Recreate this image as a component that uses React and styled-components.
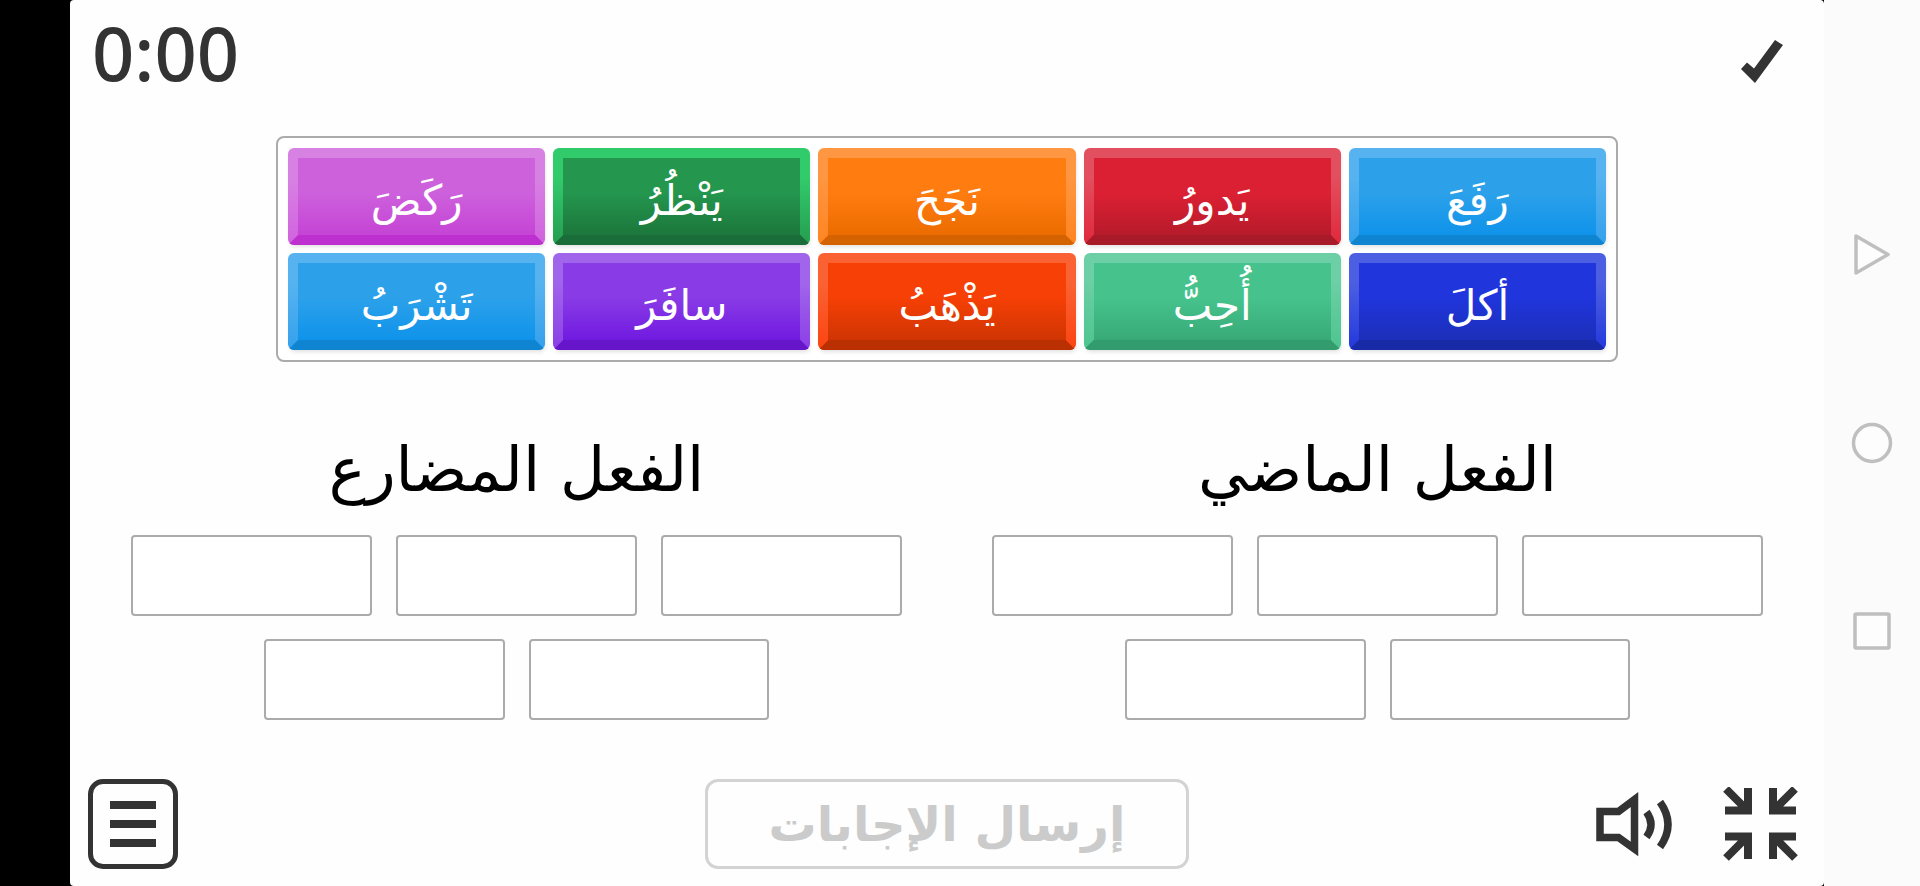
import React from "react";
import styled, { createGlobalStyle } from "styled-components";

const INK = "#333333";
const LINE = "#ababab";
const NAV = "#bfbfbf";

const GlobalStyle = createGlobalStyle`
  *, *::before, *::after { box-sizing: border-box; }
  html, body { margin: 0; padding: 0; background: #000; }
  body { font-family: "DejaVu Sans", "Noto Sans", sans-serif; color: #000; }
  button { font: inherit; color: inherit; margin: 0; padding: 0; border: 0; background: none; cursor: pointer; }
  svg { display: block; }
`;

const Screen = styled.div`
  display: grid;
  grid-template-columns: 70px minmax(0, 1fr) 96px;
  min-height: 100vh;
  background: #000;
`;

const Stage = styled.main`
  grid-column: 2;
  display: flex;
  flex-direction: column;
  background: #fefefe;
  border-radius: 4px;
`;

const Header = styled.header`
  display: flex;
  justify-content: space-between;
  align-items: flex-start;
  height: 136px;
  padding: 0 40px 0 22px;
`;

const Timer = styled.time`
  font-family: "Noto Sans", "Open Sans", sans-serif;
  font-size: 74px;
  font-weight: 500;
  line-height: 106px;
  color: ${INK};
`;

const Score = styled.div`
  padding-top: 40px;
`;

const Pool = styled.ul`
  display: grid;
  grid-template-columns: repeat(5, minmax(0, 1fr));
  gap: 8px;
  width: calc(100% - 412px);
  min-width: 700px;
  margin: 0 auto;
  padding: 10px;
  list-style: none;
  border: 2px solid ${LINE};
  border-radius: 8px;
  background: #fff;
`;

const Tile = styled.button`
  position: relative;
  display: flex;
  align-items: center;
  justify-content: center;
  width: 100%;
  height: 97px;
  padding-top: 8px;
  color: #fff;
  font-size: 42px;
  line-height: 60px;
  border: 10px solid transparent;
  border-radius: 6px;
  background:
    linear-gradient(${(p) => p.$tone.top} 45%, ${(p) => p.$tone.bottom}) padding-box,
    linear-gradient(${(p) => p.$tone.light} 30%, ${(p) => p.$tone.side}) border-box;
  box-shadow: 1px 3px 4px -1px rgba(0, 0, 0, 0.12);

  &::after {
    content: "";
    position: absolute;
    left: -10px;
    right: -10px;
    bottom: -10px;
    height: 10px;
    border-radius: 0 0 6px 6px;
    background: ${(p) => p.$tone.edge};
    clip-path: polygon(10px 0, calc(100% - 10px) 0, 100% 100%, 0 100%);
  }
`;

const Zones = styled.section`
  display: grid;
  grid-template-columns: 1fr 1fr;
  gap: 90px;
  padding: 0 61px;
`;

const Zone = styled.section`
  display: flex;
  flex-direction: column;
`;

const ZoneTitle = styled.h2`
  margin: 0;
  padding-top: 50px;
  height: 173px;
  text-align: center;
  font-size: 62px;
  font-weight: 400;
  line-height: 116px;
  white-space: nowrap;
`;

const Slots = styled.ul`
  display: flex;
  flex-wrap: wrap;
  justify-content: center;
  gap: 23px 24px;
  margin: 0;
  padding: 0;
  list-style: none;
`;

const Slot = styled.li`
  width: calc((100% - 48px) / 3);
  height: 81px;
  border: 2px solid ${LINE};
  border-radius: 4px;
  background: #fff;
`;

const Footer = styled.footer`
  display: grid;
  grid-template-columns: 1fr auto 1fr;
  align-items: center;
  margin-top: auto;
  padding: 20px 18px 17px;
`;

const MenuButton = styled.button`
  display: flex;
  flex-direction: column;
  align-items: center;
  justify-content: center;
  gap: 11px;
  width: 90px;
  height: 90px;
  border: 5px solid ${INK};
  border-radius: 15px;
`;

const MenuBar = styled.span`
  width: 46px;
  height: 8px;
  background: ${INK};
`;

const Submit = styled.button`
  width: 484px;
  height: 90px;
  border: 3px solid #d3d3d3;
  border-radius: 13px;
  color: #cbcbcb;
  font-size: 48px;
  font-weight: 700;
  line-height: 80px;
  white-space: nowrap;
`;

const Tools = styled.div`
  display: flex;
  justify-content: flex-end;
  align-items: center;
  gap: 50px;
  padding-right: 8px;
`;

const NavBar = styled.nav`
  display: flex;
  flex-direction: column;
  align-items: center;
  justify-content: center;
  gap: 148px;
  background: #fbfbfb;
`;

const blue = { light: "#57b3f0", side: "#34a0ec", top: "#2ca1ea", bottom: "#0f93ea", edge: "#0f84d0" };

const words = [
  { text: "رَفَعَ", tone: blue },
  { text: "يَدورُ", tone: { light: "#e24f5e", side: "#e0283c", top: "#dc2033", bottom: "#b71b2b", edge: "#a81a27" } },
  { text: "نَجَحَ", tone: { light: "#ff9642", side: "#ff8420", top: "#ff7c11", bottom: "#ec6c00", edge: "#d56200" } },
  { text: "يَنْظُرُ", tone: { light: "#32cb6c", side: "#259d50", top: "#24964e", bottom: "#1c773c", edge: "#1a6c38" } },
  { text: "رَكَضَ", tone: { light: "#d782e3", side: "#d162de", top: "#cd61dc", bottom: "#c544d5", edge: "#be2fd0" } },
  { text: "أكلَ", tone: { light: "#4c5fe2", side: "#2438dd", top: "#2035dc", bottom: "#1c2fba", edge: "#182aa8" } },
  { text: "أُحِبُّ", tone: { light: "#6ccfa5", side: "#4cc48f", top: "#46c38c", bottom: "#38aa78", edge: "#339c6e" } },
  { text: "يَذْهَبُ", tone: { light: "#fb6233", side: "#fb4410", top: "#f64005", bottom: "#cf3503", edge: "#ba3002" } },
  { text: "سافَرَ", tone: { light: "#a165eb", side: "#8b3ee6", top: "#893be6", bottom: "#711ae0", edge: "#6615cb" } },
  { text: "تَشْرَبُ", tone: blue },
];

const zones = ["الفعل الماضي", "الفعل المضارع"];

function CheckIcon() {
  return (
    <svg width="44" height="44" viewBox="0 0 44 44" fill={INK} aria-hidden="true">
      <path d="M1 29 7 22.500 14 28.500 35 0 43 5 15 43Z" />
    </svg>
  );
}

function SoundIcon() {
  return (
    <svg width="77" height="68" viewBox="0 0 77 68" fill="none" stroke={INK} strokeWidth="7.500" aria-hidden="true">
      <path d="M4 21.500H22.500L38.500 9.500V59L22.500 47.500H4Z" />
      <path d="M50.500 22Q59.500 34.500 50.500 47" />
      <path d="M64 12Q80 34.500 64 57" />
    </svg>
  );
}

function ShrinkIcon() {
  return (
    <svg width="75" height="75" viewBox="0 0 75 75" fill="none" stroke={INK} strokeWidth="8" aria-hidden="true">
      <path d="M3 2 24 23M2 23.500H25V1" />
      <path d="M72 2 51 23M73 23.500H50V1" />
      <path d="M3 71 24 50M2 49.500H25V72" />
      <path d="M72 71 51 50M73 49.500H50V72" />
    </svg>
  );
}

function NavIcon({ children }) {
  return (
    <svg width="40" height="40" viewBox="0 0 40 40" overflow="visible" fill="#fdfdfd" stroke={NAV} strokeWidth="3.500" strokeLinejoin="round" aria-hidden="true">
      {children}
    </svg>
  );
}

export default function App() {
  return (
    <>
      <GlobalStyle />
      <Screen>
        <Stage>
          <Header>
            <Timer>0:00</Timer>
            <Score>
              <CheckIcon />
            </Score>
          </Header>
          <Pool dir="rtl">
            {words.map((word) => (
              <li key={word.text}>
                <Tile type="button" $tone={word.tone}>{word.text}</Tile>
              </li>
            ))}
          </Pool>
          <Zones dir="rtl">
            {zones.map((title) => (
              <Zone key={title}>
                <ZoneTitle>{title}</ZoneTitle>
                <Slots>
                  {[1, 2, 3, 4, 5].map((n) => (
                    <Slot key={n} />
                  ))}
                </Slots>
              </Zone>
            ))}
          </Zones>
          <Footer>
            <MenuButton type="button" aria-label="القائمة">
              <MenuBar />
              <MenuBar />
              <MenuBar />
            </MenuButton>
            <Submit type="button" dir="rtl" disabled>إرسال الإجابات</Submit>
            <Tools>
              <button type="button" aria-label="الصوت"><SoundIcon /></button>
              <button type="button" aria-label="تصغير"><ShrinkIcon /></button>
            </Tools>
          </Footer>
        </Stage>
        <NavBar>
          <button type="button" aria-label="رجوع">
            <NavIcon><path d="M4 1V38L36 19.500Z" /></NavIcon>
          </button>
          <button type="button" aria-label="الرئيسية">
            <NavIcon><circle cx="20" cy="20" r="18.500" /></NavIcon>
          </button>
          <button type="button" aria-label="التطبيقات">
            <NavIcon><rect x="3" y="3" width="34" height="34" rx="1" /></NavIcon>
          </button>
        </NavBar>
      </Screen>
    </>
  );
}
